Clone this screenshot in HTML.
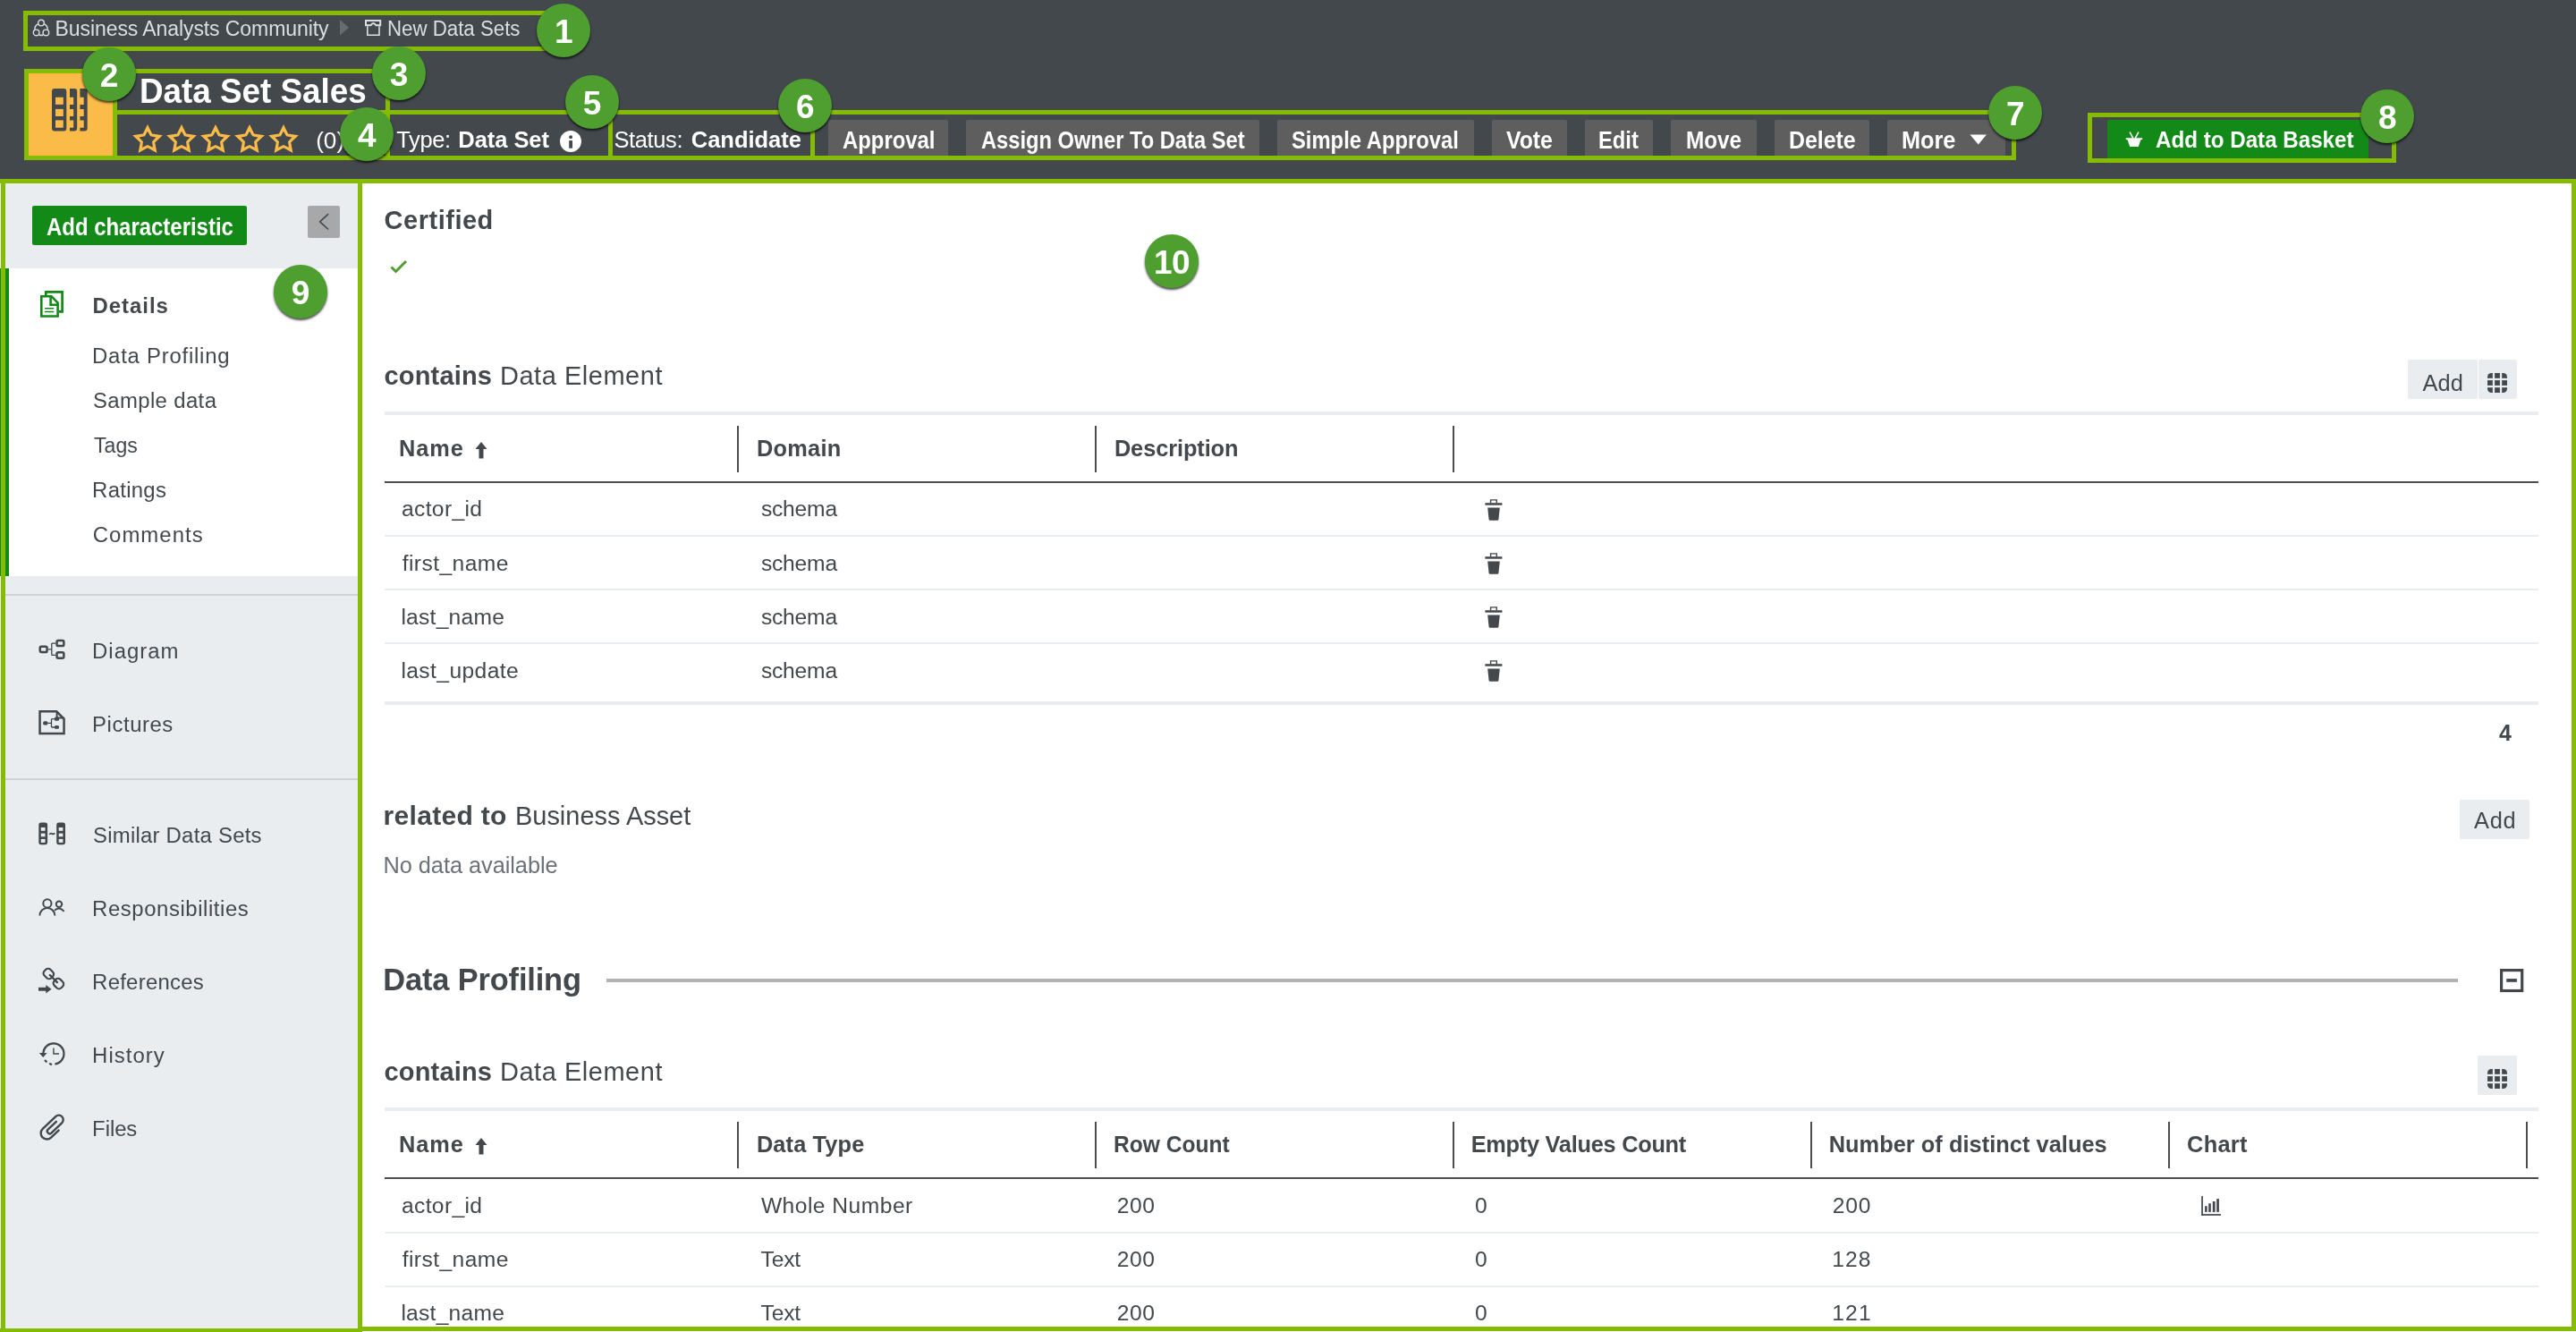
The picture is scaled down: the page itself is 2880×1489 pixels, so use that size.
<!DOCTYPE html>
<html><head><meta charset="utf-8"><style>
html,body{margin:0;padding:0;width:2880px;height:1489px;overflow:hidden;background:#fff}
.r{position:absolute;box-sizing:content-box}
svg.r{overflow:visible}
.t{position:absolute;transform-origin:0 0;font-family:"Liberation Sans",sans-serif;line-height:1;white-space:nowrap}
.c{position:absolute;width:60px;height:60px;border-radius:50%;background:#4f9e30;box-shadow:0 2px 2.5px rgba(0,0,0,0.7);color:#fff;font-family:"Liberation Sans",sans-serif;font-weight:700;font-size:37px;line-height:60px;text-align:center;letter-spacing:-0.5px;box-sizing:border-box;padding-top:2px}
</style></head><body>
<div class="r" style="left:0px;top:0px;width:2880px;height:200px;background:#43484c;"></div>
<div class="r" style="left:26px;top:12px;width:598px;height:35px;border:5px solid #86bc00;"></div>
<svg class="r" style="left:36px;top:21px" width="21" height="21" viewBox="0 0 21 21" fill="none" stroke="#dcdfe1" stroke-width="1.4"><circle cx="10" cy="4.6" r="3.3"/><circle cx="4.6" cy="15.4" r="3.3"/><circle cx="15.4" cy="15.4" r="3.3"/><path d="M6.8 5.6 C3.5 7.5 2.5 10 3 12.2 M13.2 5.6 C16.5 7.5 17.5 10 17 12.2 M7.9 18 C9.3 18.6 10.7 18.6 12.1 18"/></svg>
<svg class="r" style="left:380px;top:22px" width="10" height="18"><path d="M0 0 L10 8.8 L0 17.6Z" fill="#676c70"/></svg>
<svg class="r" style="left:408px;top:21px" width="19" height="20" viewBox="0 0 19 20" fill="none" stroke="#dcdfe1" stroke-width="2"><path d="M1 2 H17.2 V7.2 H12.3 Q9.4 2.6 6.5 7.2 H1Z"/><path d="M2.8 8.2 V18.2 H16 V8.2" stroke-width="1.6"/></svg>
<div class="r" style="left:27px;top:77px;width:409px;height:5px;background:#86bc00;"></div>
<div class="r" style="left:27px;top:77px;width:5px;height:102px;background:#86bc00;"></div>
<div class="r" style="left:27px;top:174px;width:409px;height:5px;background:#86bc00;"></div>
<div class="r" style="left:431px;top:77px;width:5px;height:102px;background:#86bc00;"></div>
<div class="r" style="left:126px;top:77px;width:5px;height:102px;background:#86bc00;"></div>
<div class="r" style="left:131px;top:123px;width:305px;height:5px;background:#86bc00;"></div>
<div class="r" style="left:32px;top:82px;width:94px;height:92px;background:#fbbb48;"></div>
<svg class="r" style="left:58px;top:99px" width="40" height="48" viewBox="0 0 40 48"><rect x="0" y="0" width="16.3" height="47.6" rx="3" fill="#43484c"/><rect x="4" y="9.75" width="8.8" height="8.1" fill="#fbbb48"/><rect x="4" y="22.9" width="8.8" height="8.1" fill="#fbbb48"/><rect x="4" y="35.4" width="8.8" height="8.35" fill="#fbbb48"/><path d="M20 0 H25 Q28.2 0 28.2 3 V44.6 Q28.2 47.6 25 47.6 H20 V43.7 H24.2 V35.4 H20 V31 H24.2 V22.9 H20 V18 H24.2 V9.75 H20Z" fill="#43484c"/><path d="M31.4 0 H36.5 Q39.7 0 39.7 3 V44.6 Q39.7 47.6 36.5 47.6 H31.4 V43.7 H35.7 V35.4 H31.4 V31 H35.7 V22.9 H31.4 V18 H35.7 V9.75 H31.4Z" fill="#43484c"/></svg>
<svg class="r" style="left:147.9px;top:138.75px" width="34" height="34" viewBox="0 0 34 34"><path d="M17.00 -0.07 L22.11 10.61 L33.85 12.17 L25.27 20.34 L27.42 31.99 L17.00 26.35 L6.58 31.99 L8.73 20.34 L0.15 12.17 L11.89 10.61Z M17.00 7.65 L20.12 13.36 L26.51 14.56 L22.04 19.29 L22.88 25.74 L17.00 22.95 L11.12 25.74 L11.96 19.29 L7.49 14.56 L13.88 13.36Z" fill="#fbbb48" fill-rule="evenodd"/></svg>
<svg class="r" style="left:185.9px;top:138.75px" width="34" height="34" viewBox="0 0 34 34"><path d="M17.00 -0.07 L22.11 10.61 L33.85 12.17 L25.27 20.34 L27.42 31.99 L17.00 26.35 L6.58 31.99 L8.73 20.34 L0.15 12.17 L11.89 10.61Z M17.00 7.65 L20.12 13.36 L26.51 14.56 L22.04 19.29 L22.88 25.74 L17.00 22.95 L11.12 25.74 L11.96 19.29 L7.49 14.56 L13.88 13.36Z" fill="#fbbb48" fill-rule="evenodd"/></svg>
<svg class="r" style="left:224.0px;top:138.75px" width="34" height="34" viewBox="0 0 34 34"><path d="M17.00 -0.07 L22.11 10.61 L33.85 12.17 L25.27 20.34 L27.42 31.99 L17.00 26.35 L6.58 31.99 L8.73 20.34 L0.15 12.17 L11.89 10.61Z M17.00 7.65 L20.12 13.36 L26.51 14.56 L22.04 19.29 L22.88 25.74 L17.00 22.95 L11.12 25.74 L11.96 19.29 L7.49 14.56 L13.88 13.36Z" fill="#fbbb48" fill-rule="evenodd"/></svg>
<svg class="r" style="left:262.1px;top:138.75px" width="34" height="34" viewBox="0 0 34 34"><path d="M17.00 -0.07 L22.11 10.61 L33.85 12.17 L25.27 20.34 L27.42 31.99 L17.00 26.35 L6.58 31.99 L8.73 20.34 L0.15 12.17 L11.89 10.61Z M17.00 7.65 L20.12 13.36 L26.51 14.56 L22.04 19.29 L22.88 25.74 L17.00 22.95 L11.12 25.74 L11.96 19.29 L7.49 14.56 L13.88 13.36Z" fill="#fbbb48" fill-rule="evenodd"/></svg>
<svg class="r" style="left:300.1px;top:138.75px" width="34" height="34" viewBox="0 0 34 34"><path d="M17.00 -0.07 L22.11 10.61 L33.85 12.17 L25.27 20.34 L27.42 31.99 L17.00 26.35 L6.58 31.99 L8.73 20.34 L0.15 12.17 L11.89 10.61Z M17.00 7.65 L20.12 13.36 L26.51 14.56 L22.04 19.29 L22.88 25.74 L17.00 22.95 L11.12 25.74 L11.96 19.29 L7.49 14.56 L13.88 13.36Z" fill="#fbbb48" fill-rule="evenodd"/></svg>
<div class="r" style="left:436px;top:123px;width:1818px;height:5px;background:#86bc00;"></div>
<div class="r" style="left:436px;top:174px;width:1818px;height:5px;background:#86bc00;"></div>
<div class="r" style="left:680px;top:123px;width:5px;height:56px;background:#86bc00;"></div>
<div class="r" style="left:906px;top:123px;width:5px;height:56px;background:#86bc00;"></div>
<div class="r" style="left:2249px;top:123px;width:5px;height:56px;background:#86bc00;"></div>
<svg class="r" style="left:626px;top:146px" width="24" height="24" viewBox="0 0 24 24"><circle cx="12" cy="12" r="11.95" fill="#fff"/><rect x="10.2" y="11.1" width="3.8" height="8.6" fill="#43484c"/><circle cx="12.1" cy="7.2" r="1.9" fill="#43484c"/></svg>
<div class="r" style="left:926px;top:134px;width:134px;height:40px;background:#5e5e5e;border-radius:2px 2px 0 0;"></div>
<div class="r" style="left:1080px;top:134px;width:328px;height:40px;background:#5e5e5e;border-radius:2px 2px 0 0;"></div>
<div class="r" style="left:1428px;top:134px;width:220px;height:40px;background:#5e5e5e;border-radius:2px 2px 0 0;"></div>
<div class="r" style="left:1668px;top:134px;width:84px;height:40px;background:#5e5e5e;border-radius:2px 2px 0 0;"></div>
<div class="r" style="left:1772px;top:134px;width:76px;height:40px;background:#5e5e5e;border-radius:2px 2px 0 0;"></div>
<div class="r" style="left:1868px;top:134px;width:96px;height:40px;background:#5e5e5e;border-radius:2px 2px 0 0;"></div>
<div class="r" style="left:1984px;top:134px;width:106px;height:40px;background:#5e5e5e;border-radius:2px 2px 0 0;"></div>
<div class="r" style="left:2110px;top:134px;width:132px;height:40px;background:#5e5e5e;border-radius:2px 2px 0 0;"></div>
<svg class="r" style="left:2202px;top:150px" width="20" height="12"><path d="M0.5 0.5 H19 L9.75 11.5Z" fill="#fff"/></svg>
<div class="r" style="left:2334px;top:126px;width:335px;height:46px;border:5px solid #86bc00;"></div>
<div class="r" style="left:2356px;top:134px;width:292px;height:43px;background:#138a17;border-radius:2px 2px 0 0;"></div>
<svg class="r" style="left:2375px;top:146px" width="22" height="20" viewBox="0 0 22 20" fill="#fff"><path d="M1.7 8.2 H20.2 V9.8 L18.3 10.6 L15.8 18.1 H6.2 L3.6 10.6 L1.7 9.8Z"/><path d="M6.4 2.2 L9.5 7.9 M15.7 2.2 L12.5 7.9" stroke="#fff" stroke-width="1.6" fill="none" stroke-linecap="round"/></svg>
<div class="r" style="left:0px;top:205px;width:400px;height:1280px;background:#e9edf0;"></div>
<div class="r" style="left:0px;top:200px;width:405px;height:5px;background:#86bc00;"></div>
<div class="r" style="left:1px;top:200px;width:5px;height:1289px;background:#86bc00;"></div>
<div class="r" style="left:400px;top:200px;width:5px;height:1289px;background:#86bc00;"></div>
<div class="r" style="left:0px;top:1485px;width:405px;height:4px;background:#86bc00;"></div>
<div class="r" style="left:0px;top:300px;width:400px;height:344px;background:#ffffff;"></div>
<div class="r" style="left:0px;top:300px;width:10px;height:344px;background:#138a17;"></div>
<div class="r" style="left:1px;top:300px;width:5px;height:344px;background:#86bc00;"></div>
<div class="r" style="left:6px;top:664px;width:394px;height:2px;background:#cfd3d6;"></div>
<div class="r" style="left:6px;top:870px;width:394px;height:2px;background:#cfd3d6;"></div>
<div class="r" style="left:36px;top:230px;width:240px;height:44px;background:#138a17;border-radius:2px;"></div>
<div class="r" style="left:344px;top:230px;width:36px;height:36px;background:#a6a8aa;border-radius:2px;"></div>
<svg class="r" style="left:354px;top:239px" width="16" height="18"><path d="M12.6 0.6 L3.6 8.8 L12.6 17" fill="none" stroke="#43484c" stroke-width="1.6" stroke-linecap="round" stroke-linejoin="round"/></svg>
<svg class="r" style="left:44px;top:324px" width="28" height="32" viewBox="0 0 28 32" fill="none" stroke="#138a17" stroke-width="2.7"><path d="M7.3 6 V2.3 H25.6 V24.4 H21.9"/><path d="M2.3 7.2 H13.5 L20.6 14.5 V29.5 H2.3Z" stroke-width="2.6" stroke-linejoin="miter"/><path d="M12.6 7.2 V16.8 H20.6" stroke-width="2.6"/><path d="M6.6 20.7 H15.7 M6.6 24.5 H15.7" stroke-width="1.5" stroke-linecap="round"/></svg>
<svg class="r" style="left:43px;top:714px" width="30" height="23" viewBox="0 0 30 23" fill="none" stroke="#43484c" stroke-width="2.5"><rect x="1.75" y="8.65" width="7.8" height="6.4" rx="1.6"/><rect x="20.55" y="2.05" width="7.8" height="6" rx="1.6"/><rect x="20.55" y="15.25" width="7.8" height="6.4" rx="1.6"/><path d="M10.8 11.85 H14.8 M14.8 5.05 V18.45 M14.8 5.05 H19.3 M14.8 18.45 H19.3" stroke-width="1.3"/></svg>
<svg class="r" style="left:43px;top:794px" width="30" height="28" viewBox="0 0 30 28" fill="none" stroke="#43484c" stroke-width="2.5"><path d="M1.55 1.3 H20.2 L28.55 9.6 V26.05 H1.55Z" stroke-linejoin="miter"/><path d="M20.6 1.3 V8.6 H28.55" stroke-width="2"/><path d="M10.4 14.4 H14.5 M14.5 9.7 V19 M14.5 9.7 H17.9 M14.5 19 H17.9" stroke-width="1.3"/><g fill="#43484c" stroke="none"><rect x="5.2" y="12.3" width="5.2" height="4.2" rx="1.5"/><rect x="17.9" y="7.6" width="5.1" height="4.2" rx="1.5"/><rect x="17.9" y="17" width="5.1" height="3.8" rx="1.5"/></g></svg>
<svg class="r" style="left:43px;top:919px" width="30" height="26" viewBox="0 0 30 26"><g fill="#43484c"><rect x="0.3" y="0.4" width="9.8" height="24.8" rx="2.6"/><rect x="20.2" y="0.4" width="9.8" height="24.8" rx="2.6"/></g><g fill="#e9edf0"><rect x="2.8" y="6" width="4.7" height="3.8"/><rect x="2.8" y="12.6" width="4.7" height="3.7"/><rect x="2.8" y="18.9" width="4.7" height="4"/><rect x="22.7" y="6" width="4.7" height="3.8"/><rect x="22.7" y="12.6" width="4.7" height="3.7"/><rect x="22.7" y="18.9" width="4.7" height="4"/></g><path d="M12.2 13.8 Q13.7 11.9 15.2 13 Q16.7 14.1 18.2 12.2" fill="none" stroke="#43484c" stroke-width="1.8"/></svg>
<svg class="r" style="left:43px;top:1003px" width="30" height="22" viewBox="0 0 30 22" fill="none" stroke="#43484c" stroke-width="2"><circle cx="9.9" cy="6.9" r="4.6"/><path d="M1.4 20.5 A8.45 8.45 0 0 1 18.3 20.5"/><circle cx="23" cy="7.8" r="3.2"/><path d="M17.9 14.9 Q23 9.5 28.6 15.8"/></svg>
<svg class="r" style="left:43px;top:1080px" width="30" height="31" viewBox="0 0 30 31" fill="none" stroke="#43484c" stroke-width="2.2"><rect x="6.55" y="3" width="9.5" height="11" rx="3.6" transform="rotate(-45 11.3 8.5)"/><rect x="17.65" y="14.1" width="9.5" height="11" rx="3.6" transform="rotate(-45 22.4 19.6)"/><path d="M12.8 10 L20.9 18.1" stroke-width="2.4" stroke-linecap="round"/><g fill="#43484c" stroke="none"><rect x="0" y="23.8" width="9" height="3.9"/><path d="M8.3 21 L14.6 25.75 L8.3 30.5Z"/></g></svg>
<svg class="r" style="left:43px;top:1163px" width="30" height="29" viewBox="0 0 30 29" fill="none" stroke="#43484c" stroke-width="2.2"><path d="M5.34 13.99 A11.6 11.6 0 1 1 18.3 26.5"/><path d="M7 22 L9.4 24.4 M12.2 25.8 L15 27.2"/><path d="M16.9 8.4 V15 H23" stroke-width="1.4"/><path d="M0.8 14 H9.6 L5.2 18.9Z" fill="#43484c" stroke="none"/></svg>
<svg class="r" style="left:44px;top:1243px" width="28" height="32" viewBox="0 0 28 32" fill="none" stroke="#43484c" stroke-width="2.4" stroke-linecap="round"><path d="M18.89 10.83 L9.63 19.66 A2.7 2.7 0 0 0 13.35 23.57 L25.15 12.32 A5 5 0 0 0 18.25 5.08 L3.77 18.88 A6.75 6.75 0 0 0 13.09 28.65 L21.56 20.58"/></svg>
<div class="r" style="left:405px;top:200px;width:2475px;height:5px;background:#86bc00;"></div>
<div class="r" style="left:2875px;top:200px;width:5px;height:1288px;background:#86bc00;"></div>
<div class="r" style="left:400px;top:1483px;width:2480px;height:5px;background:#86bc00;"></div>
<div class="r" style="left:405px;top:205px;width:2470px;height:1278px;background:#ffffff;"></div>
<svg class="r" style="left:436px;top:290px" width="20" height="16"><path d="M1.5 8.5 L6.5 13.5 L18 2" fill="none" stroke="#4f9d33" stroke-width="2.9"/></svg>
<div class="r" style="left:430px;top:460px;width:2408px;height:4px;background:#e9edf0;"></div>
<div class="r" style="left:824px;top:476px;width:2px;height:52px;background:#4b4b4b;"></div>
<div class="r" style="left:1224px;top:476px;width:2px;height:52px;background:#4b4b4b;"></div>
<div class="r" style="left:1624px;top:476px;width:2px;height:52px;background:#4b4b4b;"></div>
<div class="r" style="left:430px;top:538px;width:2408px;height:2px;background:#4b4d4f;"></div>
<div class="r" style="left:430px;top:598px;width:2408px;height:2px;background:#e9edf0;"></div>
<div class="r" style="left:430px;top:658px;width:2408px;height:2px;background:#e9edf0;"></div>
<div class="r" style="left:430px;top:718px;width:2408px;height:2px;background:#e9edf0;"></div>
<div class="r" style="left:430px;top:784px;width:2408px;height:4px;background:#e9edf0;"></div>
<svg class="r" style="left:531px;top:493.5px" width="14" height="19" viewBox="0 0 14 19"><path d="M7 0 L13.5 8 H9.5 V18.5 H4.5 V8 H0.5Z" fill="#43484c"/></svg>
<svg class="r" style="left:1660px;top:558px" width="20" height="24" viewBox="0 0 20 24" fill="#43484c"><rect x="0.4" y="4.2" width="19" height="2.5"/><path d="M6.6 4.5 V0.9 H13.3 V4.5" fill="none" stroke="#43484c" stroke-width="1.4"/><path d="M3.2 9.4 H16.8 L15.4 22.8 Q15.2 23.7 14.3 23.7 H5.7 Q4.8 23.7 4.6 22.8Z"/></svg>
<svg class="r" style="left:1660px;top:618px" width="20" height="24" viewBox="0 0 20 24" fill="#43484c"><rect x="0.4" y="4.2" width="19" height="2.5"/><path d="M6.6 4.5 V0.9 H13.3 V4.5" fill="none" stroke="#43484c" stroke-width="1.4"/><path d="M3.2 9.4 H16.8 L15.4 22.8 Q15.2 23.7 14.3 23.7 H5.7 Q4.8 23.7 4.6 22.8Z"/></svg>
<svg class="r" style="left:1660px;top:678px" width="20" height="24" viewBox="0 0 20 24" fill="#43484c"><rect x="0.4" y="4.2" width="19" height="2.5"/><path d="M6.6 4.5 V0.9 H13.3 V4.5" fill="none" stroke="#43484c" stroke-width="1.4"/><path d="M3.2 9.4 H16.8 L15.4 22.8 Q15.2 23.7 14.3 23.7 H5.7 Q4.8 23.7 4.6 22.8Z"/></svg>
<svg class="r" style="left:1660px;top:738px" width="20" height="24" viewBox="0 0 20 24" fill="#43484c"><rect x="0.4" y="4.2" width="19" height="2.5"/><path d="M6.6 4.5 V0.9 H13.3 V4.5" fill="none" stroke="#43484c" stroke-width="1.4"/><path d="M3.2 9.4 H16.8 L15.4 22.8 Q15.2 23.7 14.3 23.7 H5.7 Q4.8 23.7 4.6 22.8Z"/></svg>
<div class="r" style="left:2692px;top:402px;width:77.5px;height:44px;background:#e9edf0;border-radius:2px;"></div>
<div class="r" style="left:2770.5px;top:402px;width:43.5px;height:44px;background:#e9edf0;border-radius:2px;"></div>
<svg class="r" style="left:2781px;top:417px" width="22" height="22" viewBox="0 0 22 22" fill="#43484c"><clipPath id="gc417"><rect width="22" height="22" rx="4.5"/></clipPath><g clip-path="url(#gc417)"><rect x="0" y="0" width="5.8" height="5.8"/><rect x="8.1" y="0" width="5.8" height="5.8"/><rect x="16.2" y="0" width="5.8" height="5.8"/><rect x="0" y="8.1" width="5.8" height="5.8"/><rect x="8.1" y="8.1" width="5.8" height="5.8"/><rect x="16.2" y="8.1" width="5.8" height="5.8"/><rect x="0" y="16.2" width="5.8" height="5.8"/><rect x="8.1" y="16.2" width="5.8" height="5.8"/><rect x="16.2" y="16.2" width="5.8" height="5.8"/></g></svg>
<div class="r" style="left:2750px;top:894px;width:78px;height:44px;background:#e9edf0;border-radius:2px;"></div>
<div class="r" style="left:678px;top:1094px;width:2070px;height:4px;background:#b3b3b3;"></div>
<svg class="r" style="left:2795px;top:1083px" width="27" height="27" viewBox="0 0 27 27" fill="none" stroke="#43484c"><rect x="1.6" y="1.6" width="23.1" height="22.9" stroke-width="3.2"/><rect x="7.2" y="11.1" width="11.7" height="3.7" fill="#43484c" stroke="none"/></svg>
<div class="r" style="left:2770px;top:1180px;width:44px;height:44px;background:#e9edf0;border-radius:2px;"></div>
<svg class="r" style="left:2781px;top:1195px" width="22" height="22" viewBox="0 0 22 22" fill="#43484c"><clipPath id="gc1195"><rect width="22" height="22" rx="4.5"/></clipPath><g clip-path="url(#gc1195)"><rect x="0" y="0" width="5.8" height="5.8"/><rect x="8.1" y="0" width="5.8" height="5.8"/><rect x="16.2" y="0" width="5.8" height="5.8"/><rect x="0" y="8.1" width="5.8" height="5.8"/><rect x="8.1" y="8.1" width="5.8" height="5.8"/><rect x="16.2" y="8.1" width="5.8" height="5.8"/><rect x="0" y="16.2" width="5.8" height="5.8"/><rect x="8.1" y="16.2" width="5.8" height="5.8"/><rect x="16.2" y="16.2" width="5.8" height="5.8"/></g></svg>
<div class="r" style="left:430px;top:1238px;width:2408px;height:4px;background:#e9edf0;"></div>
<div class="r" style="left:824px;top:1254px;width:2px;height:52px;background:#4b4b4b;"></div>
<div class="r" style="left:1224px;top:1254px;width:2px;height:52px;background:#4b4b4b;"></div>
<div class="r" style="left:1624px;top:1254px;width:2px;height:52px;background:#4b4b4b;"></div>
<div class="r" style="left:2024px;top:1254px;width:2px;height:52px;background:#4b4b4b;"></div>
<div class="r" style="left:2424px;top:1254px;width:2px;height:52px;background:#4b4b4b;"></div>
<div class="r" style="left:2824px;top:1254px;width:2px;height:52px;background:#4b4b4b;"></div>
<div class="r" style="left:430px;top:1316px;width:2408px;height:2px;background:#4b4d4f;"></div>
<div class="r" style="left:430px;top:1377px;width:2408px;height:2px;background:#e9edf0;"></div>
<div class="r" style="left:430px;top:1437px;width:2408px;height:2px;background:#e9edf0;"></div>
<svg class="r" style="left:531px;top:1271.5px" width="14" height="19" viewBox="0 0 14 19"><path d="M7 0 L13.5 8 H9.5 V18.5 H4.5 V8 H0.5Z" fill="#43484c"/></svg>
<svg class="r" style="left:2461px;top:1337px" width="23" height="23" viewBox="0 0 23 23" fill="#43484c"><rect x="0.2" y="0.1" width="1.7" height="21.7"/><rect x="0.2" y="20.1" width="21.7" height="1.7"/><rect x="4.1" y="11.2" width="2.5" height="6.7"/><rect x="8.2" y="8.3" width="2.6" height="9.6"/><rect x="12.8" y="6" width="2.8" height="11.9"/><rect x="17.2" y="3.1" width="2.7" height="14.8"/></svg>
<div style="position:absolute;left:0;top:0;width:2880px;height:1489px;will-change:transform">
<div class="t" style="left:61.6px;top:20.9px;font-size:23.04px;color:#dcdfe1;letter-spacing:-0.10px;">Business Analysts Community</div>
<div class="t" style="left:432.8px;top:20.9px;font-size:23.04px;color:#dcdfe1;transform:scaleX(0.9665);">New Data Sets</div>
<div class="t" style="left:155.7px;top:83.0px;font-size:38.77px;font-weight:700;color:#fff;transform:scaleX(0.9498);">Data Set Sales</div>
<div class="t" style="left:353.2px;top:144.3px;font-size:26.09px;color:#fff;">(0)</div>
<div class="t" style="left:443.2px;top:144.4px;font-size:25.51px;color:#fff;letter-spacing:-0.36px;">Type:</div>
<div class="t" style="left:512.3px;top:144.4px;font-size:25.51px;font-weight:700;color:#fff;letter-spacing:-0.05px;">Data Set</div>
<div class="t" style="left:686.4px;top:144.4px;font-size:25.51px;color:#fff;letter-spacing:-0.38px;">Status:</div>
<div class="t" style="left:772.8px;top:144.4px;font-size:25.51px;font-weight:700;color:#fff;letter-spacing:-0.03px;">Candidate</div>
<div class="t" style="left:941.6px;top:143.7px;font-size:26.81px;font-weight:700;color:#fff;transform:scaleX(0.8910);">Approval</div>
<div class="t" style="left:1096.6px;top:143.7px;font-size:26.81px;font-weight:700;color:#fff;transform:scaleX(0.8845);">Assign Owner To Data Set</div>
<div class="t" style="left:1444.1px;top:143.7px;font-size:26.81px;font-weight:700;color:#fff;transform:scaleX(0.8876);">Simple Approval</div>
<div class="t" style="left:1683.8px;top:143.7px;font-size:26.81px;font-weight:700;color:#fff;transform:scaleX(0.9244);">Vote</div>
<div class="t" style="left:1787.3px;top:143.7px;font-size:26.81px;font-weight:700;color:#fff;transform:scaleX(0.8857);">Edit</div>
<div class="t" style="left:1884.7px;top:143.7px;font-size:26.81px;font-weight:700;color:#fff;transform:scaleX(0.9065);">Move</div>
<div class="t" style="left:1999.7px;top:143.7px;font-size:26.81px;font-weight:700;color:#fff;transform:scaleX(0.9280);">Delete</div>
<div class="t" style="left:2126.4px;top:143.7px;font-size:26.81px;font-weight:700;color:#fff;transform:scaleX(0.9439);">More</div>
<div class="t" style="left:2410.4px;top:144.4px;font-size:25.36px;font-weight:700;color:#fff;transform:scaleX(0.9528);">Add to Data Basket</div>
<div class="t" style="left:51.6px;top:239.9px;font-size:27.17px;font-weight:700;color:#fff;transform:scaleX(0.8814);">Add characteristic</div>
<div class="t" style="left:103.4px;top:329.7px;font-size:23.91px;font-weight:700;color:#43484c;letter-spacing:1.01px;">Details</div>
<div class="t" style="left:103.1px;top:385.7px;font-size:23.91px;color:#43484c;letter-spacing:0.76px;">Data Profiling</div>
<div class="t" style="left:104.0px;top:435.7px;font-size:23.91px;color:#43484c;letter-spacing:0.37px;">Sample data</div>
<div class="t" style="left:104.5px;top:485.7px;font-size:23.91px;color:#43484c;transform:scaleX(0.9663);">Tags</div>
<div class="t" style="left:103.1px;top:536.4px;font-size:23.91px;color:#43484c;letter-spacing:0.28px;">Ratings</div>
<div class="t" style="left:103.8px;top:586.4px;font-size:23.91px;color:#43484c;letter-spacing:1.03px;">Comments</div>
<div class="t" style="left:103.1px;top:715.7px;font-size:23.91px;color:#43484c;letter-spacing:1.01px;">Diagram</div>
<div class="t" style="left:103.1px;top:797.7px;font-size:23.91px;color:#43484c;letter-spacing:0.55px;">Pictures</div>
<div class="t" style="left:104.0px;top:922.2px;font-size:23.91px;color:#43484c;letter-spacing:0.24px;">Similar Data Sets</div>
<div class="t" style="left:103.1px;top:1003.9px;font-size:23.91px;color:#43484c;letter-spacing:0.57px;">Responsibilities</div>
<div class="t" style="left:103.1px;top:1085.7px;font-size:23.91px;color:#43484c;letter-spacing:0.27px;">References</div>
<div class="t" style="left:103.1px;top:1168.2px;font-size:23.91px;color:#43484c;letter-spacing:1.03px;">History</div>
<div class="t" style="left:103.1px;top:1249.9px;font-size:23.91px;color:#43484c;letter-spacing:-0.06px;">Files</div>
<div class="t" style="left:429.6px;top:232.1px;font-size:28.99px;font-weight:700;color:#43484c;letter-spacing:0.52px;">Certified</div>
<div class="t" style="left:429.6px;top:405.9px;font-size:28.99px;font-weight:700;color:#43484c;letter-spacing:0.16px;">contains</div>
<div class="t" style="left:559.0px;top:405.9px;font-size:28.99px;color:#43484c;letter-spacing:0.53px;">Data Element</div>
<div class="t" style="left:429.6px;top:1183.9px;font-size:28.99px;font-weight:700;color:#43484c;letter-spacing:0.16px;">contains</div>
<div class="t" style="left:559.0px;top:1183.9px;font-size:28.99px;color:#43484c;letter-spacing:0.53px;">Data Element</div>
<div class="t" style="left:445.9px;top:488.9px;font-size:25.36px;font-weight:700;color:#43484c;letter-spacing:0.94px;">Name</div>
<div class="t" style="left:845.9px;top:488.9px;font-size:25.36px;font-weight:700;color:#43484c;letter-spacing:0.27px;">Domain</div>
<div class="t" style="left:1245.9px;top:488.9px;font-size:25.36px;font-weight:700;color:#43484c;letter-spacing:-0.09px;">Description</div>
<div class="t" style="left:449.0px;top:557.1px;font-size:24.64px;color:#43484c;letter-spacing:0.34px;">actor_id</div>
<div class="t" style="left:850.9px;top:557.1px;font-size:24.64px;color:#43484c;letter-spacing:-0.20px;">schema</div>
<div class="t" style="left:449.7px;top:617.6px;font-size:24.64px;color:#43484c;letter-spacing:0.42px;">first_name</div>
<div class="t" style="left:850.9px;top:617.6px;font-size:24.64px;color:#43484c;letter-spacing:-0.20px;">schema</div>
<div class="t" style="left:448.4px;top:677.6px;font-size:24.64px;color:#43484c;letter-spacing:0.24px;">last_name</div>
<div class="t" style="left:850.9px;top:677.6px;font-size:24.64px;color:#43484c;letter-spacing:-0.20px;">schema</div>
<div class="t" style="left:448.4px;top:737.6px;font-size:24.64px;color:#43484c;letter-spacing:0.40px;">last_update</div>
<div class="t" style="left:850.9px;top:737.6px;font-size:24.64px;color:#43484c;letter-spacing:-0.20px;">schema</div>
<div class="t" style="left:2794.0px;top:806.3px;font-size:26.09px;font-weight:700;color:#43484c;transform:scaleX(0.9541);">4</div>
<div class="t" style="left:2708.5px;top:416.4px;font-size:25.36px;color:#43484c;letter-spacing:0.11px;">Add</div>
<div class="t" style="left:2766.0px;top:904.9px;font-size:25.36px;color:#43484c;letter-spacing:0.74px;">Add</div>
<div class="t" style="left:428.6px;top:896.9px;font-size:30.07px;font-weight:700;color:#43484c;letter-spacing:0.28px;">related to</div>
<div class="t" style="left:575.7px;top:896.9px;font-size:30.07px;color:#43484c;transform:scaleX(0.9627);">Business Asset</div>
<div class="t" style="left:428.5px;top:955.2px;font-size:25.36px;color:#6b7176;letter-spacing:-0.05px;">No data available</div>
<div class="t" style="left:428.3px;top:1077.5px;font-size:34.42px;font-weight:700;color:#43484c;letter-spacing:-0.15px;">Data Profiling</div>
<div class="t" style="left:445.9px;top:1266.9px;font-size:25.36px;font-weight:700;color:#43484c;letter-spacing:0.94px;">Name</div>
<div class="t" style="left:845.9px;top:1266.9px;font-size:25.36px;font-weight:700;color:#43484c;letter-spacing:0.13px;">Data Type</div>
<div class="t" style="left:1244.7px;top:1266.9px;font-size:25.36px;font-weight:700;color:#43484c;transform:scaleX(0.9699);">Row Count</div>
<div class="t" style="left:1644.7px;top:1266.9px;font-size:25.36px;font-weight:700;color:#43484c;letter-spacing:-0.27px;">Empty Values Count</div>
<div class="t" style="left:2044.7px;top:1266.9px;font-size:25.36px;font-weight:700;color:#43484c;letter-spacing:0.04px;">Number of distinct values</div>
<div class="t" style="left:2445.0px;top:1266.9px;font-size:25.36px;font-weight:700;color:#43484c;letter-spacing:0.32px;">Chart</div>
<div class="t" style="left:449.0px;top:1335.6px;font-size:24.64px;color:#43484c;letter-spacing:0.34px;">actor_id</div>
<div class="t" style="left:850.9px;top:1335.6px;font-size:24.64px;color:#43484c;letter-spacing:0.47px;">Whole Number</div>
<div class="t" style="left:1248.8px;top:1335.6px;font-size:24.64px;color:#43484c;letter-spacing:0.50px;">200</div>
<div class="t" style="left:1649.1px;top:1335.6px;font-size:24.64px;color:#43484c;">0</div>
<div class="t" style="left:2048.8px;top:1335.6px;font-size:24.64px;color:#43484c;letter-spacing:0.75px;">200</div>
<div class="t" style="left:449.7px;top:1395.6px;font-size:24.64px;color:#43484c;letter-spacing:0.42px;">first_name</div>
<div class="t" style="left:850.5px;top:1395.6px;font-size:24.64px;color:#43484c;letter-spacing:-0.18px;">Text</div>
<div class="t" style="left:1248.8px;top:1395.6px;font-size:24.64px;color:#43484c;letter-spacing:0.50px;">200</div>
<div class="t" style="left:1649.1px;top:1395.6px;font-size:24.64px;color:#43484c;">0</div>
<div class="t" style="left:2048.2px;top:1395.6px;font-size:24.64px;color:#43484c;letter-spacing:1.10px;">128</div>
<div class="t" style="left:448.4px;top:1455.6px;font-size:24.64px;color:#43484c;letter-spacing:0.24px;">last_name</div>
<div class="t" style="left:850.5px;top:1455.6px;font-size:24.64px;color:#43484c;letter-spacing:-0.18px;">Text</div>
<div class="t" style="left:1248.8px;top:1455.6px;font-size:24.64px;color:#43484c;letter-spacing:0.50px;">200</div>
<div class="t" style="left:1649.1px;top:1455.6px;font-size:24.64px;color:#43484c;">0</div>
<div class="t" style="left:2048.2px;top:1455.6px;font-size:24.64px;color:#43484c;letter-spacing:1.20px;">121</div>
<div class="c" style="left:600.00px;top:3.75px">1</div>
<div class="c" style="left:91.75px;top:52.50px">2</div>
<div class="c" style="left:415.75px;top:52.00px">3</div>
<div class="c" style="left:380.00px;top:120.00px">4</div>
<div class="c" style="left:631.75px;top:83.75px">5</div>
<div class="c" style="left:870.00px;top:87.50px">6</div>
<div class="c" style="left:2223.00px;top:96.25px">7</div>
<div class="c" style="left:2639.00px;top:100.00px">8</div>
<div class="c" style="left:305.75px;top:296.25px">9</div>
<div class="c" style="left:1280.00px;top:262.00px">10</div>
</div>
</body></html>
